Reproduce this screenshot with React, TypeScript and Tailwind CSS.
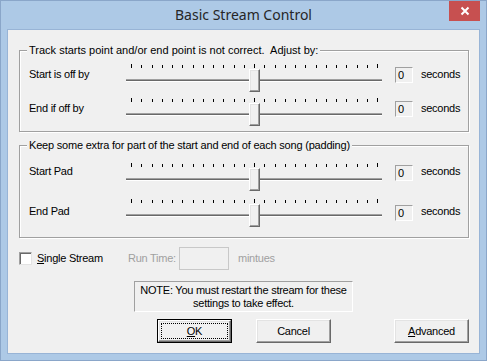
import React from "react";

const FONT = { fontFamily: '"Liberation Sans", Arial, sans-serif' };

function Slider() {
  const ticks = Array.from({ length: 25 }, (_, i) => i);
  return (
    <div className="relative w-[256px] h-[29px]">
      <div className="ml-[5px] w-[247px] h-[4px] flex justify-between items-end">
        {ticks.map((i) => (
          <div
            key={i}
            className={
              i === 0 || i === 24 || i === 12
                ? "w-[1px] h-[4px] bg-black"
                : "w-[1px] h-[3px] bg-black"
            }
          />
        ))}
      </div>
      <div className="mt-[11px] w-full flex flex-col">
        <div className="h-[1px] bg-[#a0a0a0]" />
        <div className="h-[1px] bg-[#696969]" />
        <div className="h-[1px] bg-[#ffffff]" />
      </div>
      <div className="absolute left-[123px] top-[5px] w-[11px] h-[23px] bg-[#f0f0f0] border-t border-l border-t-white border-l-white border-b border-r border-b-[#696969] border-r-[#696969] shadow-[inset_-1px_-1px_0_#a0a0a0,inset_1px_1px_0_#e3e3e3]" />
    </div>
  );
}

function ValueBox() {
  return (
    <div className="w-[18px] h-[16px] border-t border-l border-t-[#a0a0a0] border-l-[#a0a0a0] border-b border-r border-b-white border-r-white bg-[#f0f0f0] pl-[2px] text-[11px] leading-[14px]">
      0
    </div>
  );
}

function SliderRow({
  label,
  className,
  textMt,
  boxMt,
}: {
  label: string;
  className: string;
  textMt: string;
  boxMt: string;
}) {
  return (
    <div className={"flex items-start pl-[9px] " + className}>
      <div className={"w-[97px] leading-[13px] " + textMt}>{label}</div>
      <Slider />
      <div className={"ml-[13px] " + boxMt}>
        <ValueBox />
      </div>
      <div className={"ml-[8px] leading-[13px] " + textMt}>seconds</div>
    </div>
  );
}

function Button({ children, def }: { children: React.ReactNode; def?: boolean }) {
  if (def) {
    return (
      <div className="w-[75px] h-[24px] border border-black">
        <div className="w-full h-full bg-[#f0f0f0] border-t border-l border-t-white border-l-white border-b border-r border-b-[#696969] border-r-[#696969] shadow-[inset_-1px_-1px_0_#a0a0a0,inset_1px_1px_0_#e3e3e3] p-[2px]">
          <div className="w-full h-full border border-dotted border-black flex items-center justify-center leading-[13px]">
            {children}
          </div>
        </div>
      </div>
    );
  }
  return (
    <div className="w-[75px] h-[24px] bg-[#f0f0f0] border-t border-l border-t-white border-l-white border-b border-r border-b-[#696969] border-r-[#696969] shadow-[inset_-1px_-1px_0_#a0a0a0,inset_1px_1px_0_#e3e3e3] flex items-center justify-center leading-[13px]">
      {children}
    </div>
  );
}

export default function App() {
  return (
    <div
      className="w-[487px] h-[361px] border border-[#8aa6c9] bg-[#adc9e6] flex flex-col text-black text-[11px] tracking-[-0.25px]"
      style={FONT}
    >
      <div className="h-[28px] grid grid-cols-[1fr_auto_1fr] items-start">
        <div />
        <div
          className="pt-[4px] text-[14px] leading-[20px] text-[#262626] tracking-normal"
          style={{ fontFamily: '"Noto Sans", "Open Sans", sans-serif' }}
        >
          Basic Stream Control
        </div>
        <div className="flex justify-end pr-[6px]">
          <div className="w-[31px] h-[20px] bg-[#c75050] flex items-center justify-center">
            <svg width="10" height="10" viewBox="0 0 10 10">
              <path d="M1.5 1.5 L8.5 8.5 M8.5 1.5 L1.5 8.5" stroke="#fff" strokeWidth="2" />
            </svg>
          </div>
        </div>
      </div>

      <div className="mx-[6px] mb-[6px] flex-1 border border-[#98b4d6] bg-[#f0f0f0] flex flex-col">
        <fieldset className="ml-[11px] mt-[14px] w-[450px] border border-[#a0a0a0] shadow-[inset_1px_1px_0_#fff,1px_1px_0_#fff] pb-[4px]">
          <legend className="ml-[7px] px-[2px] leading-[13px] bg-[#f0f0f0] tracking-[0px]">
            Track starts point and/or end point is not correct.&nbsp; Adjust by:
          </legend>
          <SliderRow label="Start is off by" className="mt-[7px]" textMt="mt-[4px]" boxMt="mt-[3px]" />
          <SliderRow label="End if off by" className="mt-[5px]" textMt="mt-[4px]" boxMt="mt-[3px]" />
        </fieldset>

        <fieldset className="ml-[11px] mt-[7px] w-[450px] border border-[#a0a0a0] shadow-[inset_1px_1px_0_#fff,1px_1px_0_#fff] pb-[9px]">
          <legend className="ml-[7px] px-[2px] leading-[13px] bg-[#f0f0f0] tracking-[-0.2px]">
            Keep some extra for part of the start and end of each song (padding)
          </legend>
          <SliderRow label="Start Pad" className="mt-[11px]" textMt="mt-[2px]" boxMt="mt-[2px]" />
          <SliderRow label="End Pad" className="mt-[7px]" textMt="mt-[6px]" boxMt="mt-[6px]" />
        </fieldset>

        <div className="mt-[9px] ml-[11px] flex items-center h-[23px]">
          <div className="w-[109px] flex items-center">
            <div className="w-[13px] h-[13px] bg-white border-t border-l border-t-[#a0a0a0] border-l-[#a0a0a0] border-b border-r border-b-[#e3e3e3] border-r-[#e3e3e3] shadow-[inset_1px_1px_0_#696969]" />
            <div className="ml-[5px] leading-[13px]">
              <span className="underline">S</span>ingle Stream
            </div>
          </div>
          <div className="w-[51px] text-[#a0a0a0] leading-[13px]">Run Time:</div>
          <div className="w-[50px] h-[23px] border border-[#c8c8c8] bg-[#f0f0f0]" />
          <div className="ml-[9px] text-[#a0a0a0] leading-[13px]">mintues</div>
        </div>

        <div className="mt-[11px] ml-[126px] w-[219px] h-[31px] border-t border-l border-t-[#a0a0a0] border-l-[#a0a0a0] border-b border-r border-b-white border-r-white flex flex-col items-center justify-center leading-[13px]">
          <div>NOTE: You must restart the stream for these</div>
          <div>settings to take effect.</div>
        </div>

        <div className="mt-[7px] ml-[149px] flex">
          <Button def>
            <span className="underline">O</span>K
          </Button>
          <div className="ml-[24px]">
            <Button>Cancel</Button>
          </div>
          <div className="ml-[63px]">
            <Button>
              <span className="underline">A</span>dvanced
            </Button>
          </div>
        </div>
      </div>
    </div>
  );
}
